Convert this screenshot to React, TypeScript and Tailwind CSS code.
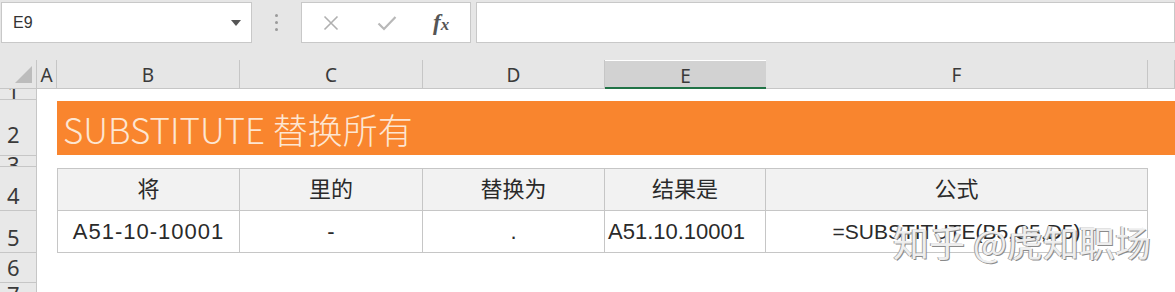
import React from "react";

const cellFont = "font-['Liberation_Sans','Noto_Sans_CJK_SC',sans-serif]";
const headFont = "font-['Noto_Sans','Noto_Sans_CJK_SC',sans-serif]";

const columns = [
  { letter: "A", selected: false },
  { letter: "B", selected: false },
  { letter: "C", selected: false },
  { letter: "D", selected: false },
  { letter: "E", selected: true },
  { letter: "F", selected: false },
  { letter: "", selected: false },
];

const headerRow = ["将", "里的", "替换为", "结果是", "公式"];

const RowNum: React.FC<{ n: string; pb: string; cut?: "top" | "bottom" }> = ({ n, pb, cut }) => (
  <div
    className={`flex overflow-hidden border-b border-r border-[#c6c6c6] bg-[#e8e8e8] pl-[7px] text-[22px] leading-none text-[#3a3a3a] ${headFont} ${
      cut === "top" ? "items-start" : "items-end"
    } ${pb}`}
  >
    <span className={cut === "bottom" ? "-mb-[4px]" : cut === "top" ? "-mt-[3px]" : ""}>{n}</span>
  </div>
);

export default function App() {
  return (
    <div className="relative h-[292px] w-[1175px] overflow-hidden bg-white">
      {/* formula bar */}
      <div className="flex h-[60px] items-start bg-[#e6e6e6] pt-[2px]">
        <div className="ml-[1px] flex h-[41px] w-[251px] items-center justify-between border border-[#c8c8c8] bg-white pl-[11px] pr-[10px]">
          <span className={`text-[16px] text-[#333] ${cellFont}`}>E9</span>
          <span className="h-0 w-0 border-x-[5px] border-t-[6px] border-x-transparent border-t-[#555]" />
        </div>
        <div className="flex h-[41px] w-[49px] flex-col items-center justify-center gap-[4px]">
          <span className="h-[3px] w-[3px] rounded-full bg-[#9a9a9a]" />
          <span className="h-[3px] w-[3px] rounded-full bg-[#9a9a9a]" />
          <span className="h-[3px] w-[3px] rounded-full bg-[#9a9a9a]" />
        </div>
        <div className="flex h-[41px] w-[170px] items-center border border-[#c8c8c8] bg-white">
          <svg className="ml-[21px]" width="16" height="16" viewBox="0 0 16 16">
            <path d="M1.5 1.5L14.5 14.5M14.5 1.5L1.5 14.5" stroke="#b0b0b0" strokeWidth="1.6" fill="none" />
          </svg>
          <svg className="ml-[38px]" width="20" height="16" viewBox="0 0 20 16">
            <path d="M1.5 8.5L7 14L18.5 2" stroke="#b8b8b8" strokeWidth="2.2" fill="none" />
          </svg>
          <span className="ml-[36px] font-['Liberation_Serif',serif] text-[23px] font-bold italic leading-none text-[#555]">
            f<span className="text-[17px]">x</span>
          </span>
        </div>
        <div className="ml-[5px] h-[41px] flex-1 border border-[#c8c8c8] bg-white" />
      </div>

      {/* sheet */}
      <div className="grid grid-cols-[37px_20px_183px_183px_182px_161px_382px_27px] grid-rows-[29px_11px_56px_11px_44px_42px_30px_30px]">
        {/* column headers */}
        <div className="relative border-b border-r border-[#c6c6c6] bg-[#e6e6e6]">
          <span className="absolute bottom-[5px] right-[4px] h-0 w-0 border-b-[17px] border-l-[17px] border-b-[#bcbcbc] border-l-transparent" />
        </div>
        {columns.map((c, i) => (
          <div
            key={i}
            className={`flex items-end justify-center text-[19px] leading-none text-[#3a3a3a] ${headFont} ${
              c.selected
                ? "mt-[1px] border-b-2 border-[#217346] bg-[#d2d2d2] pb-[1px]"
                : "border-b border-r border-[#c6c6c6] bg-[#e6e6e6] pb-[3px]"
            }`}
          >
            {c.letter}
          </div>
        ))}

        {/* row 1 */}
        <RowNum n="1" pb="pb-0" cut="bottom" />
        <div className="col-span-7" />

        {/* row 2: title band */}
        <RowNum n="2" pb="pb-[10px]" />
        <div />
        <div className="col-span-6 my-[1px] flex items-center bg-[#f9852e] pl-[6px]">
          <span className="font-['Noto_Sans_CJK_SC','Noto_Sans',sans-serif] text-[35px] font-light leading-none text-[#fde6d2]">
            SUBSTITUTE 替换所有
          </span>
        </div>

        {/* row 3 */}
        <RowNum n="3" pb="pt-0" cut="top" />
        <div className="col-span-7" />

        {/* row 4: table header */}
        <RowNum n="4" pb="pb-[4px]" />
        <div />
        {headerRow.map((t, i) => (
          <div
            key={t}
            className={`mt-[1px] flex items-center justify-center border-b border-r border-t border-[#c6c6c6] bg-[#f2f2f2] text-[22px] text-[#2a2a2a] ${cellFont} ${
              i === 0 ? "border-l" : ""
            }`}
          >
            {t}
          </div>
        ))}
        <div />

        {/* row 5: data */}
        <RowNum n="5" pb="pb-[4px]" />
        <div />
        <div className={`flex items-center justify-center border-b border-l border-r border-[#c6c6c6] text-[22px] tracking-[1px] text-[#2a2a2a] ${cellFont}`}>
          A51-10-10001
        </div>
        <div className={`flex items-center justify-center border-b border-r border-[#c6c6c6] text-[22px] text-[#2a2a2a] ${cellFont}`}>
          -
        </div>
        <div className={`flex items-center justify-center border-b border-r border-[#c6c6c6] text-[22px] text-[#2a2a2a] ${cellFont}`}>
          .
        </div>
        <div className={`flex items-center border-b border-r border-[#c6c6c6] pl-[3px] text-[22px] text-[#2a2a2a] ${cellFont}`}>
          A51.10.10001
        </div>
        <div className={`flex items-center justify-center border-b border-r border-[#c6c6c6] text-[21px] text-[#2a2a2a] ${cellFont}`}>
          =SUBSTITUTE(B5,C5,D5)
        </div>
        <div />

        {/* rows 6-7 */}
        <RowNum n="6" pb="pb-[4px]" />
        <div className="col-span-7" />
        <RowNum n="7" pb="pt-[3px]" cut="top" />
        <div className="col-span-7" />
      </div>

      {/* watermark */}
      <div className="pointer-events-none absolute left-[893px] top-[223px] font-['Noto_Sans_CJK_SC',sans-serif] text-[36px] leading-none text-white/85 [text-shadow:1px_1px_0_#8a8a8a,-1px_0_0_#a0a0a0]">
        知乎 @虎知职场
      </div>
    </div>
  );
}
